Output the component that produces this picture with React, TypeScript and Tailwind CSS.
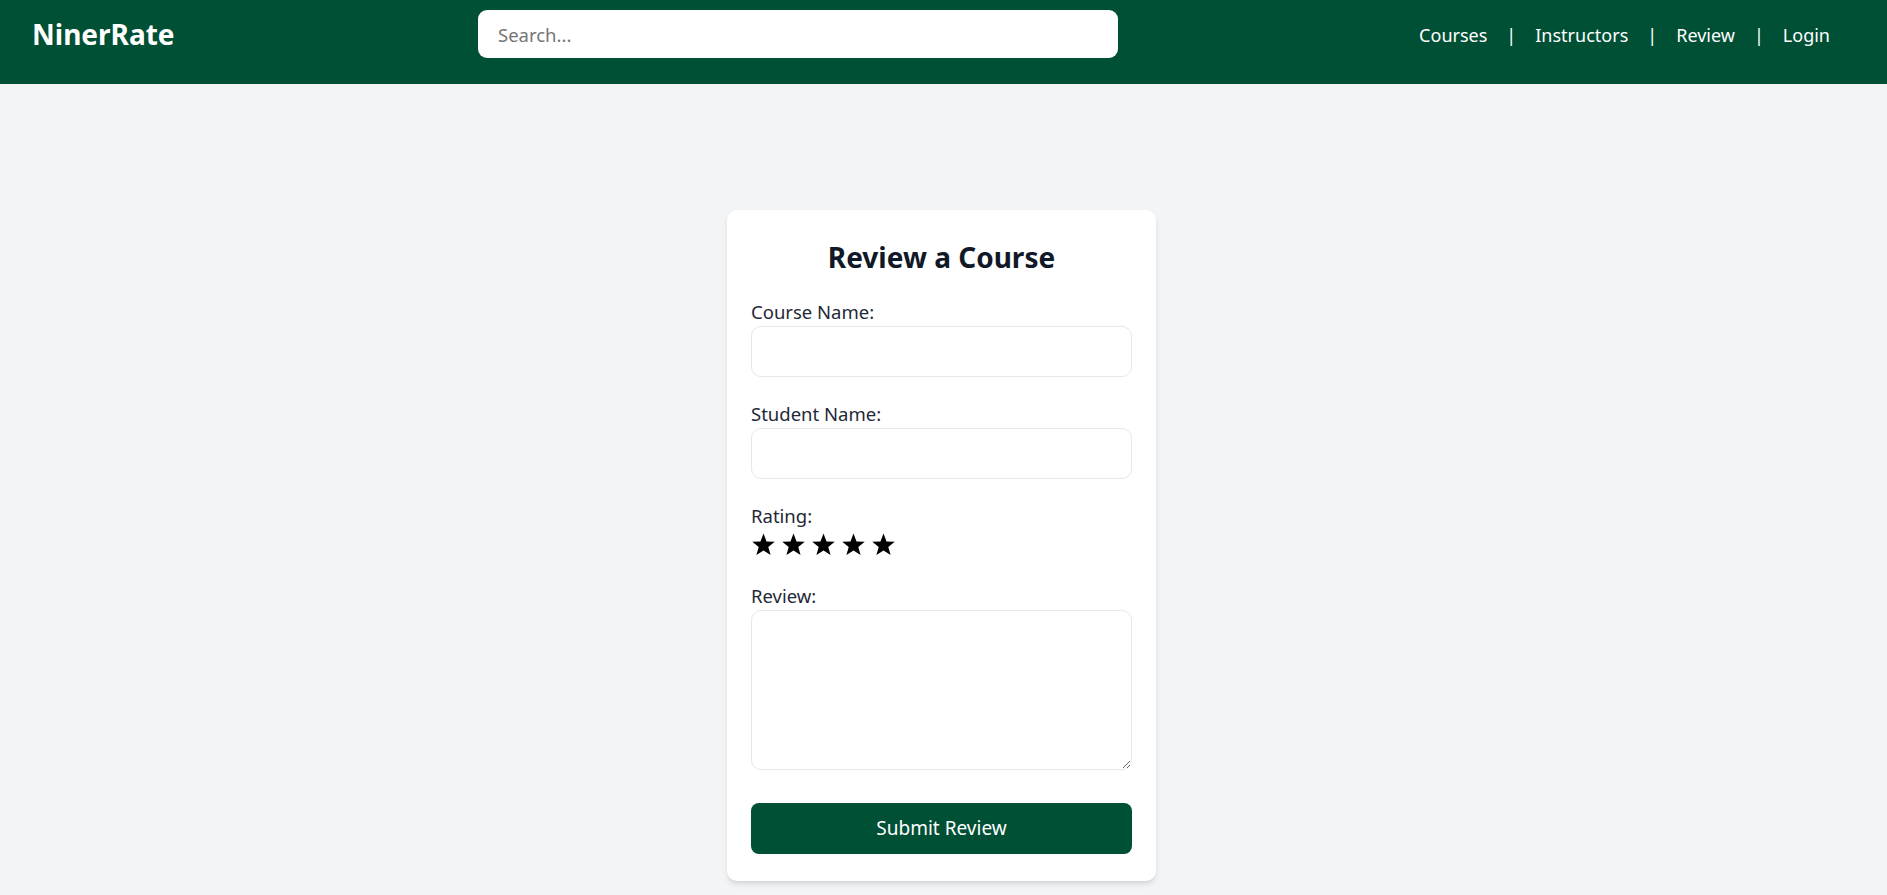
import React from 'react';

function Star() {
  return (
    <svg width="25" height="24" viewBox="0 0 24 23" className="shrink-0">
      <polygon
        points="12,0.5 14.9,8.1 22.8,8.4 16.6,13.4 18.8,21.2 12,16.7 5.2,21.2 7.4,13.4 1.2,8.4 9.1,8.1"
        fill="#000"
      />
    </svg>
  );
}

function Field({ label, children }: { label: string; children: React.ReactNode }) {
  return (
    <div className="mb-[22px] flex flex-col">
      <label className="text-[18.5px] leading-[29px] text-[#1f2937]">{label}</label>
      {children}
    </div>
  );
}

export default function App() {
  const navItems = ['Courses', 'Instructors', 'Review', 'Login'];

  return (
    <div className="min-h-screen bg-[#f3f4f6] font-['Noto_Sans',sans-serif]">
      {/* Header */}
      <header className="h-[84px] bg-[#005035] pb-[16px]">
        <div className="flex h-[68px] items-center pl-[32px] pr-[57px]">
          <div className="w-[446px] text-[28px] font-bold leading-none text-white">NinerRate</div>
          <input
            type="text"
            placeholder="Search..."
            className="h-[48px] w-[640px] rounded-[9px] bg-white px-[20px] text-[18.5px] text-gray-900 outline-none placeholder:text-[#757575]"
          />
          <nav className="ml-auto flex items-center pt-[2px] text-[18px] text-white">
            {navItems.map((item, i) => (
              <React.Fragment key={item}>
                {i > 0 && <span className="mx-[19px]">|</span>}
                <a href="#" className="leading-none">
                  {item}
                </a>
              </React.Fragment>
            ))}
          </nav>
        </div>
      </header>

      {/* Review form */}
      <main className="flex justify-center pr-[4px] pt-[126px]">
        <div className="w-[429px] rounded-[10px] bg-white px-[24px] pb-[27px] pt-[29px] shadow-md">
          <h2 className="mb-[22px] text-center text-[28px] font-bold leading-[36px] text-[#111827]">
            Review a Course
          </h2>

          <Field label="Course Name:">
            <input
              type="text"
              className="h-[51px] w-full rounded-[10px] border border-gray-200 px-[12px] text-[19px] outline-none"
            />
          </Field>

          <Field label="Student Name:">
            <input
              type="text"
              className="h-[51px] w-full rounded-[10px] border border-gray-200 px-[12px] text-[19px] outline-none"
            />
          </Field>

          <Field label="Rating:">
            <div className="flex h-[29px] items-center gap-[5px]">
              {[0, 1, 2, 3, 4].map((n) => (
                <Star key={n} />
              ))}
            </div>
          </Field>

          <div className="mb-[33px] flex flex-col">
            <label className="text-[18.5px] leading-[29px] text-[#1f2937]">Review:</label>
            <textarea className="block h-[160px] w-full rounded-[10px] border border-gray-200 px-[12px] py-[8px] text-[19px] outline-none" />
          </div>

          <button
            type="submit"
            className="h-[51px] w-full rounded-[8px] bg-[#005035] text-[19px] text-white"
          >
            Submit Review
          </button>
        </div>
      </main>
    </div>
  );
}
